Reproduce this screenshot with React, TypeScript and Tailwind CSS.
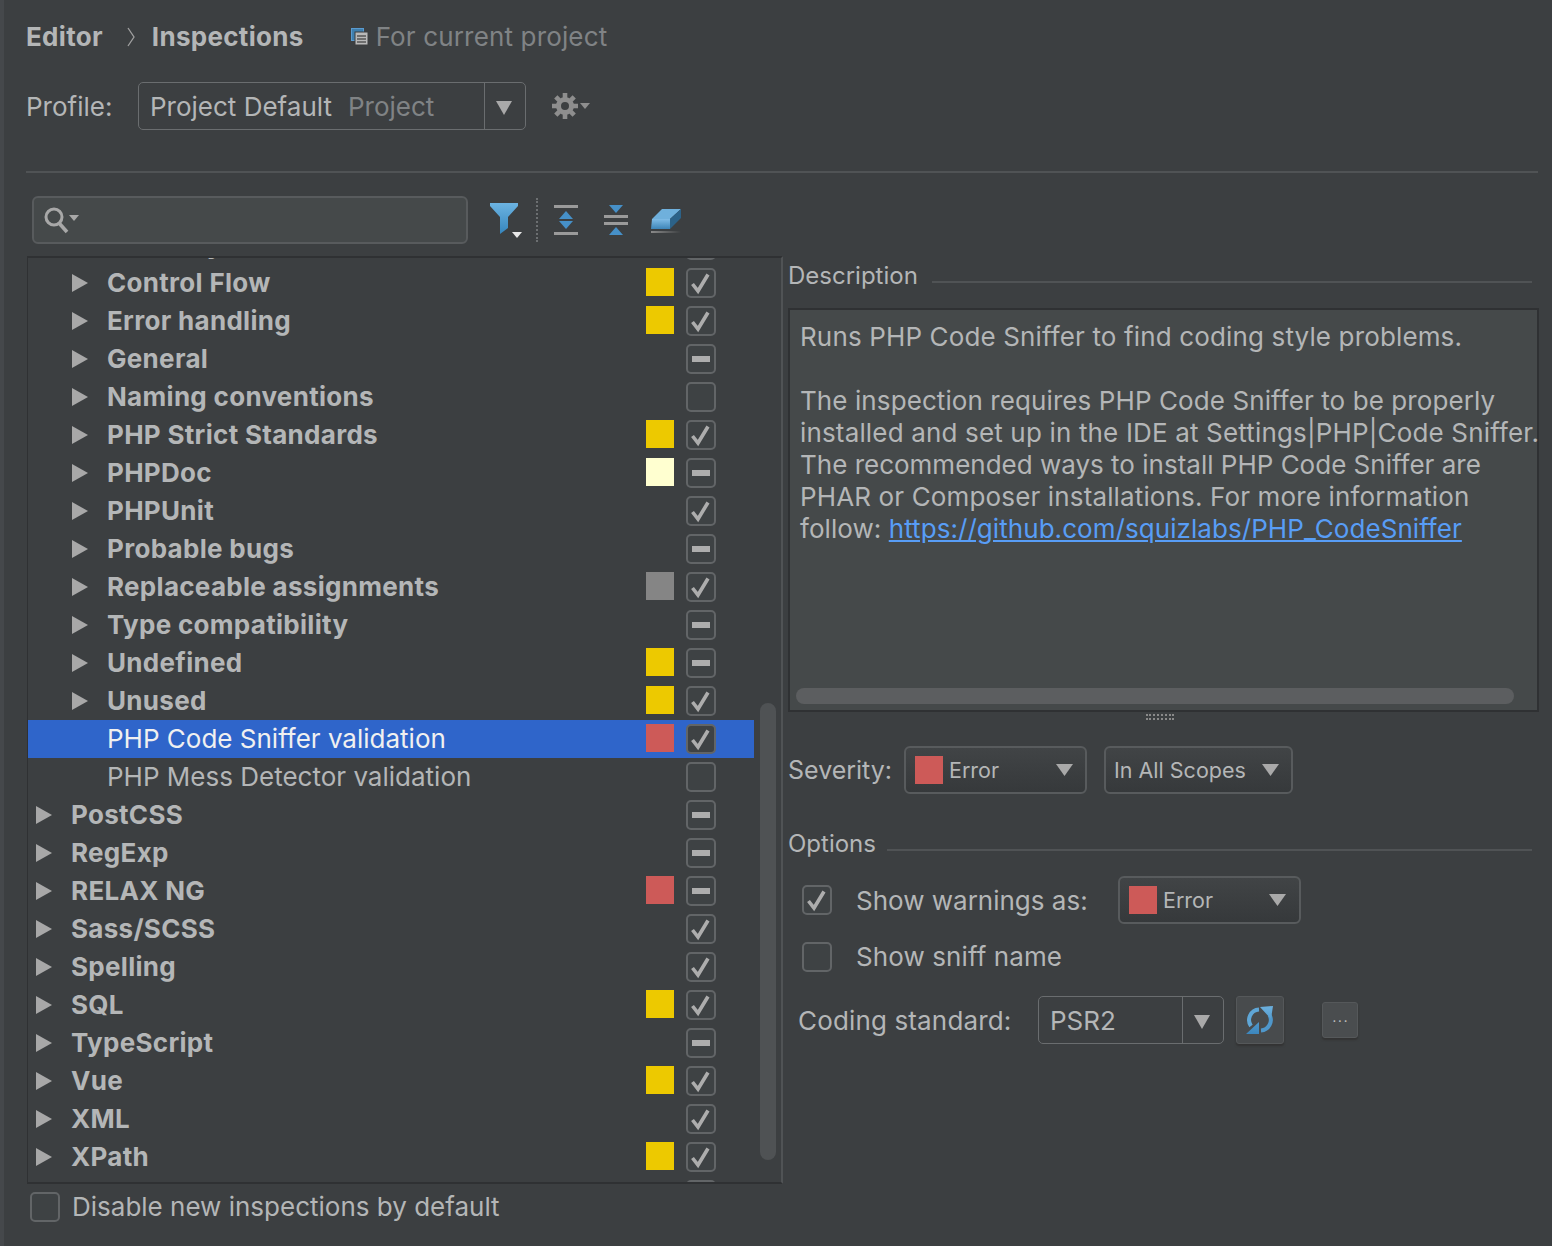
import type { ReactNode } from "react";

const YELLOW = "bg-[#edc900]";
const RED = "bg-[#cd5a58]";
const PALE = "bg-[#ffffd0]";
const GRAY = "bg-[#858585]";

type Row = {
  name: string;
  level: 1 | 2;
  swatch?: string;
  state: "on" | "off" | "mixed";
  arrow?: boolean;
  selected?: boolean;
  plain?: boolean;
};

const rows: Row[] = [
  { name: "Code style", level: 2, state: "on", arrow: true },
  { name: "Control Flow", level: 2, swatch: YELLOW, state: "on", arrow: true },
  { name: "Error handling", level: 2, swatch: YELLOW, state: "on", arrow: true },
  { name: "General", level: 2, state: "mixed", arrow: true },
  { name: "Naming conventions", level: 2, state: "off", arrow: true },
  { name: "PHP Strict Standards", level: 2, swatch: YELLOW, state: "on", arrow: true },
  { name: "PHPDoc", level: 2, swatch: PALE, state: "mixed", arrow: true },
  { name: "PHPUnit", level: 2, state: "on", arrow: true },
  { name: "Probable bugs", level: 2, state: "mixed", arrow: true },
  { name: "Replaceable assignments", level: 2, swatch: GRAY, state: "on", arrow: true },
  { name: "Type compatibility", level: 2, state: "mixed", arrow: true },
  { name: "Undefined", level: 2, swatch: YELLOW, state: "mixed", arrow: true },
  { name: "Unused", level: 2, swatch: YELLOW, state: "on", arrow: true },
  { name: "PHP Code Sniffer validation", level: 2, swatch: RED, state: "on", selected: true, plain: true },
  { name: "PHP Mess Detector validation", level: 2, state: "off", plain: true },
  { name: "PostCSS", level: 1, state: "mixed", arrow: true },
  { name: "RegExp", level: 1, state: "mixed", arrow: true },
  { name: "RELAX NG", level: 1, swatch: RED, state: "mixed", arrow: true },
  { name: "Sass/SCSS", level: 1, state: "on", arrow: true },
  { name: "Spelling", level: 1, state: "on", arrow: true },
  { name: "SQL", level: 1, swatch: YELLOW, state: "on", arrow: true },
  { name: "TypeScript", level: 1, state: "mixed", arrow: true },
  { name: "Vue", level: 1, swatch: YELLOW, state: "on", arrow: true },
  { name: "XML", level: 1, state: "on", arrow: true },
  { name: "XPath", level: 1, swatch: YELLOW, state: "on", arrow: true },
  // only the top of this row's checkbox shows under the fold
  { name: "", level: 1, state: "on" },
];

function Checkbox({ state }: { state: "on" | "off" | "mixed" }) {
  return (
    <span className="flex h-[30px] w-[30px] shrink-0 items-center justify-center rounded-[5px] border-2 border-[#626567] bg-[#3e4244]">
      {state === "on" && (
        <svg width="26" height="26" viewBox="0 0 26 26">
          <path d="M4.5 14 L10 21 L20 4.5" fill="none" stroke="#adadad" strokeWidth="3.6" />
        </svg>
      )}
      {state === "mixed" && <span className="h-[6px] w-[18px] bg-[#adadad]" />}
    </span>
  );
}

function Arrow() {
  return (
    <svg width="16" height="18" viewBox="0 0 16 18" className="shrink-0">
      <path d="M0 0 L16 9 L0 18 Z" fill="#a8a8a8" />
    </svg>
  );
}

function Caret({ w = 17, h = 12 }: { w?: number; h?: number }) {
  return (
    <svg width={w} height={h} viewBox="0 0 17 12" preserveAspectRatio="none" className="shrink-0">
      <path d="M0 0 H17 L8.5 12 Z" fill="#a9a9a9" />
    </svg>
  );
}

function TreeRow({ row }: { row: Row }) {
  const indent = row.level === 2 ? "pl-[44px]" : "pl-[8px]";
  return (
    <div className={`flex h-[38px] w-[726px] shrink-0 items-center ${row.selected ? "bg-[#2f65ca]" : ""}`}>
      <div className={`flex w-[618px] items-center ${indent}`}>
        {row.arrow && <Arrow />}
        <span
          className={`${row.arrow ? "ml-[19px]" : "ml-[35px]"} ${
            row.plain ? "font-normal" : "font-bold tracking-[0.3px]"
          } ${row.selected ? "text-[#f0f0f0]" : "text-[#b4b6b7]"} mb-[2px] whitespace-nowrap`}
        >
          {row.name}
        </span>
      </div>
      <span className={`mb-[2px] h-[28px] w-[28px] shrink-0 ${row.swatch ?? ""}`} />
      <span className="ml-[12px]">
        <Checkbox state={row.state} />
      </span>
    </div>
  );
}

function SelectBox({ children, className }: { children: ReactNode; className: string }) {
  return (
    <div
      className={`flex h-[48px] items-center rounded-[6px] border-2 border-[#585b5d] bg-gradient-to-b from-[#414446] to-[#36393b] text-[21.5px] ${className}`}
    >
      {children}
    </div>
  );
}

function Combo({ className, children }: { className: string; children: ReactNode }) {
  return (
    <div className={`flex h-[48px] items-center rounded-[5px] border border-[#6a6d6f] ${className}`}>
      <div className="flex min-w-0 flex-1 items-center whitespace-nowrap pl-[11px]">{children}</div>
      <div className="flex h-full w-[41px] items-center justify-center border-l border-[#6a6d6f] pr-[2px] pt-[3px]">
        <Caret w={16} h={14} />
      </div>
    </div>
  );
}

function Title({ label, gap, line }: { label: string; gap: string; line: string }) {
  return (
    <div className="flex items-start text-[24px]">
      <span className="leading-[30px]">{label}</span>
      <span className={`h-[2px] flex-1 bg-[#505355] ${gap} ${line}`} />
    </div>
  );
}

export default function App() {
  return (
    <div className="h-[1246px] w-[1552px] overflow-hidden border-l-[4px] border-[#45484b] bg-[#3c3f41] font-['Inter','Noto_Sans',sans-serif] text-[26px] text-[#b4b6b7]">
      <div className="flex h-[74px] items-center pl-[22px] font-bold leading-none tracking-[0.3px]">
        <span>Editor</span>
        <svg width="10" height="20" viewBox="0 0 10 20" className="ml-[23px]">
          <path d="M2 1 L8 10 L2 19" fill="none" stroke="#a0a0a0" strokeWidth="1.3" />
        </svg>
        <span className="ml-[16px]">Inspections</span>
        <svg width="18" height="18" viewBox="0 0 18 18" className="ml-[47px]">
          <rect x="0.5" y="0.5" width="12" height="12" fill="#3f7fae" stroke="#5a9bd0" />
          <rect x="4" y="4" width="13" height="13" fill="#b9b9b9" stroke="#3c3f41" />
          <path d="M6 8 H15 M6 11 H15 M6 14 H15" stroke="#555" strokeWidth="1.4" />
        </svg>
        <span className="ml-[7px] font-normal tracking-[0.15px] text-[#808385]">For current project</span>
      </div>

      <div className="mt-[8px] flex items-center pl-[22px]">
        <span className="w-[112px]">Profile:</span>
        <Combo className="w-[388px]">
          <span>Project Default</span>
          <span className="ml-[16px] text-[#808385]">Project</span>
        </Combo>
        <svg width="40" height="26" viewBox="0 0 40 26" className="ml-[26px]">
          <circle cx="13" cy="13" r="6.5" fill="none" stroke="#8e8e8e" strokeWidth="5" />
          <path
            d="M13 0 V5 M13 21 V26 M0 13 H5 M21 13 H26 M3.8 3.8 L7.3 7.3 M18.7 18.7 L22.2 22.2 M3.8 22.2 L7.3 18.7 M18.7 7.3 L22.2 3.8"
            stroke="#8e8e8e"
            strokeWidth="4.6"
          />
          <path d="M28 10 H38 L33 16 Z" fill="#8e8e8e" />
        </svg>
      </div>

      <div className="ml-[22px] mr-[14px] mt-[41px] h-[2px] bg-[#505355]" />

      <div className="mt-[23px] flex items-center pl-[28px]">
        <div className="flex h-[48px] w-[436px] items-center rounded-[6px] border-2 border-[#585b5d] bg-[#45494a] pl-[10px]">
          <svg width="36" height="28" viewBox="0 0 36 28">
            <circle cx="10" cy="11" r="8" fill="none" stroke="#a8a8a8" strokeWidth="3" />
            <path d="M15 17 L23 26" stroke="#a8a8a8" strokeWidth="3.6" />
            <path d="M25 9 H35 L30 15 Z" fill="#a8a8a8" />
          </svg>
        </div>
        <svg width="36" height="36" viewBox="0 0 36 36" className="ml-[21px]">
          <defs>
            <linearGradient id="fb" x1="0" y1="0" x2="0" y2="1">
              <stop offset="0" stopColor="#6cb4e2" />
              <stop offset="1" stopColor="#3585bd" />
            </linearGradient>
          </defs>
          <path d="M1 1 H29 V4 L19 15 V26 L11 32 V15 L1 4 Z" fill="url(#fb)" />
          <path d="M23 30 H33 L28 36 Z" fill="#e8e8e8" />
        </svg>
        <span className="ml-[11px] h-[44px] border-l-2 border-dotted border-[#6c6f71]" />
        <svg width="26" height="30" viewBox="0 0 26 30" className="ml-[15px]">
          <path d="M1 1.5 H25 M1 28.5 H25" stroke="#9a9a9a" strokeWidth="3" />
          <path d="M13 6 L20 14 H6 Z M6 16 H20 L13 24 Z" fill="#4690c8" />
        </svg>
        <svg width="26" height="30" viewBox="0 0 26 30" className="ml-[24px]">
          <path d="M1 11.5 H25 M1 18.5 H25" stroke="#9a9a9a" strokeWidth="3" />
          <path d="M6 0 H20 L13 8 Z M13 22 L20 30 H6 Z" fill="#4690c8" />
        </svg>
        <svg width="32" height="28" viewBox="0 0 32 28" className="ml-[22px]">
          <defs>
            <linearGradient id="er" x1="0" y1="0" x2="0" y2="1">
              <stop offset="0" stopColor="#7fbce6" />
              <stop offset="1" stopColor="#3d85b8" />
            </linearGradient>
            <linearGradient id="ln" x1="0" y1="0" x2="1" y2="0">
              <stop offset="0" stopColor="#8a8a8a" />
              <stop offset="1" stopColor="#3c3f41" />
            </linearGradient>
          </defs>
          <path d="M1 13 L11 3 H30 L19 13 Z" fill="#6fb0dc" />
          <path d="M1 13 H19 V23 H0 Z" fill="url(#er)" />
          <path d="M19 13 L30 3 V12 L19 23 Z" fill="#2c6288" />
          <rect x="0" y="25" width="30" height="2" fill="url(#ln)" />
        </svg>
      </div>

      <div className="mt-[12px] flex items-start pl-[23px]">
        <div className="relative h-[928px] w-[756px] shrink-0 overflow-hidden border-y-2 border-l border-r-2 border-[#2f3133] border-r-[#505355]">
          <div className="-mt-[32px] flex flex-col">
            {rows.map((row, i) => (
              <TreeRow key={i} row={row} />
            ))}
          </div>
          <div className="absolute left-[732px] top-[445px] h-[457px] w-[16px] rounded-full bg-[#4f5254]" />
        </div>

        <div className="ml-[5px] mt-[5px] w-[751px] shrink-0">
          <Title label="Description" gap="ml-[14px]" line="mt-[20px] mr-[7px]" />
          <div className="relative mt-[17px] h-[404px] border-2 border-[#2f3133] bg-[#45494a] pl-[10px] pt-[11px] leading-[32px]">
            <p className="whitespace-nowrap tracking-[0.14px]">Runs PHP Code Sniffer to find coding style problems.</p>
            <p className="mt-[32px] whitespace-nowrap tracking-[0.09px]">The inspection requires PHP Code Sniffer to be properly</p>
            <p className="whitespace-nowrap tracking-[0.16px]">installed and set up in the IDE at Settings|PHP|Code Sniffer.</p>
            <p className="whitespace-nowrap">The recommended ways to install PHP Code Sniffer are</p>
            <p className="whitespace-nowrap tracking-[0.14px]">PHAR or Composer installations. For more information</p>
            <p className="whitespace-nowrap tracking-[0.06px]">
              follow: <span className="text-[#589df6] underline">https://github.com/squizlabs/PHP_CodeSniffer</span>
            </p>
            <div className="absolute bottom-[6px] left-[6px] h-[16px] w-[718px] rounded-full bg-[#5c5e60]" />
          </div>
          <div className="flex h-[10px] items-center justify-center pr-[7px]">
            <span className="h-[6px] w-[28px] border-y-2 border-dotted border-[#8a8a8a]" />
          </div>

          <div className="mt-[24px] flex items-center">
            <span className="mt-[2px] w-[116px] text-[25px]">Severity:</span>
            <SelectBox className="w-[183px]">
              <span className="ml-[9px] h-[28px] w-[28px] bg-[#cd5a58]" />
              <span className="ml-[6px]">Error</span>
              <span className="ml-auto mr-[12px]">
                <Caret />
              </span>
            </SelectBox>
            <SelectBox className="ml-[17px] w-[189px]">
              <span className="ml-[8px] whitespace-nowrap">In All Scopes</span>
              <span className="ml-auto mr-[12px]">
                <Caret />
              </span>
            </SelectBox>
          </div>

          <div className="mt-[35px]">
            <Title label="Options" gap="ml-[11px]" line="mt-[20px] mr-[7px]" />
          </div>

          <div className="mt-[17px] flex items-center pl-[14px]">
            <Checkbox state="on" />
            <span className="ml-[24px] mt-[1px] w-[262px] whitespace-nowrap">Show warnings as:</span>
            <SelectBox className="w-[183px]">
              <span className="ml-[9px] h-[28px] w-[28px] bg-[#cd5a58]" />
              <span className="ml-[6px]">Error</span>
              <span className="ml-auto mr-[13px]">
                <Caret />
              </span>
            </SelectBox>
          </div>

          <div className="mt-[13px] flex items-center pl-[14px]">
            <Checkbox state="off" />
            <span className="ml-[24px] whitespace-nowrap tracking-[0.1px]">Show sniff name</span>
          </div>

          <div className="mt-[20px] flex items-center pl-[10px]">
            <span className="w-[240px] whitespace-nowrap tracking-[0.15px]">Coding standard:</span>
            <Combo className="w-[186px]">
              <span>PSR2</span>
            </Combo>
            <button className="ml-[12px] flex h-[48px] w-[48px] items-center justify-center rounded-[3px] border border-[#55585a] bg-[#484b4d] shadow-[0_2px_2px_#333]">
              <svg width="28" height="28" viewBox="0 0 28 28">
                <defs>
                  <linearGradient id="rf" x1="0" y1="0" x2="0" y2="1">
                    <stop offset="0" stopColor="#6cb0de" />
                    <stop offset="1" stopColor="#3c86bd" />
                  </linearGradient>
                </defs>
                <path d="M13 3.5 A10.5 10.5 0 0 0 5 20" fill="none" stroke="#5fa6d6" strokeWidth="4" />
                <path d="M15 24.5 A10.5 10.5 0 0 0 23.5 9" fill="none" stroke="#4f97cb" strokeWidth="4" />
                <path d="M14 1 L27 0 L25 13 Z M0 28 L13 28 L13 16 Z" fill="url(#rf)" />
              </svg>
            </button>
            <button className="ml-[38px] flex h-[36px] w-[36px] items-center justify-center rounded-[3px] border border-[#55585a] bg-[#4a4d4f] pb-[6px] pl-[2px] text-[13px] leading-none tracking-[2px] text-[#c0c0c0] shadow-[0_2px_2px_#333]">
              ...
            </button>
          </div>
        </div>
      </div>

      <div className="mt-[3px] flex items-center pl-[26px]">
        <Checkbox state="off" />
        <span className="ml-[12px] whitespace-nowrap">Disable new inspections by default</span>
      </div>
    </div>
  );
}
